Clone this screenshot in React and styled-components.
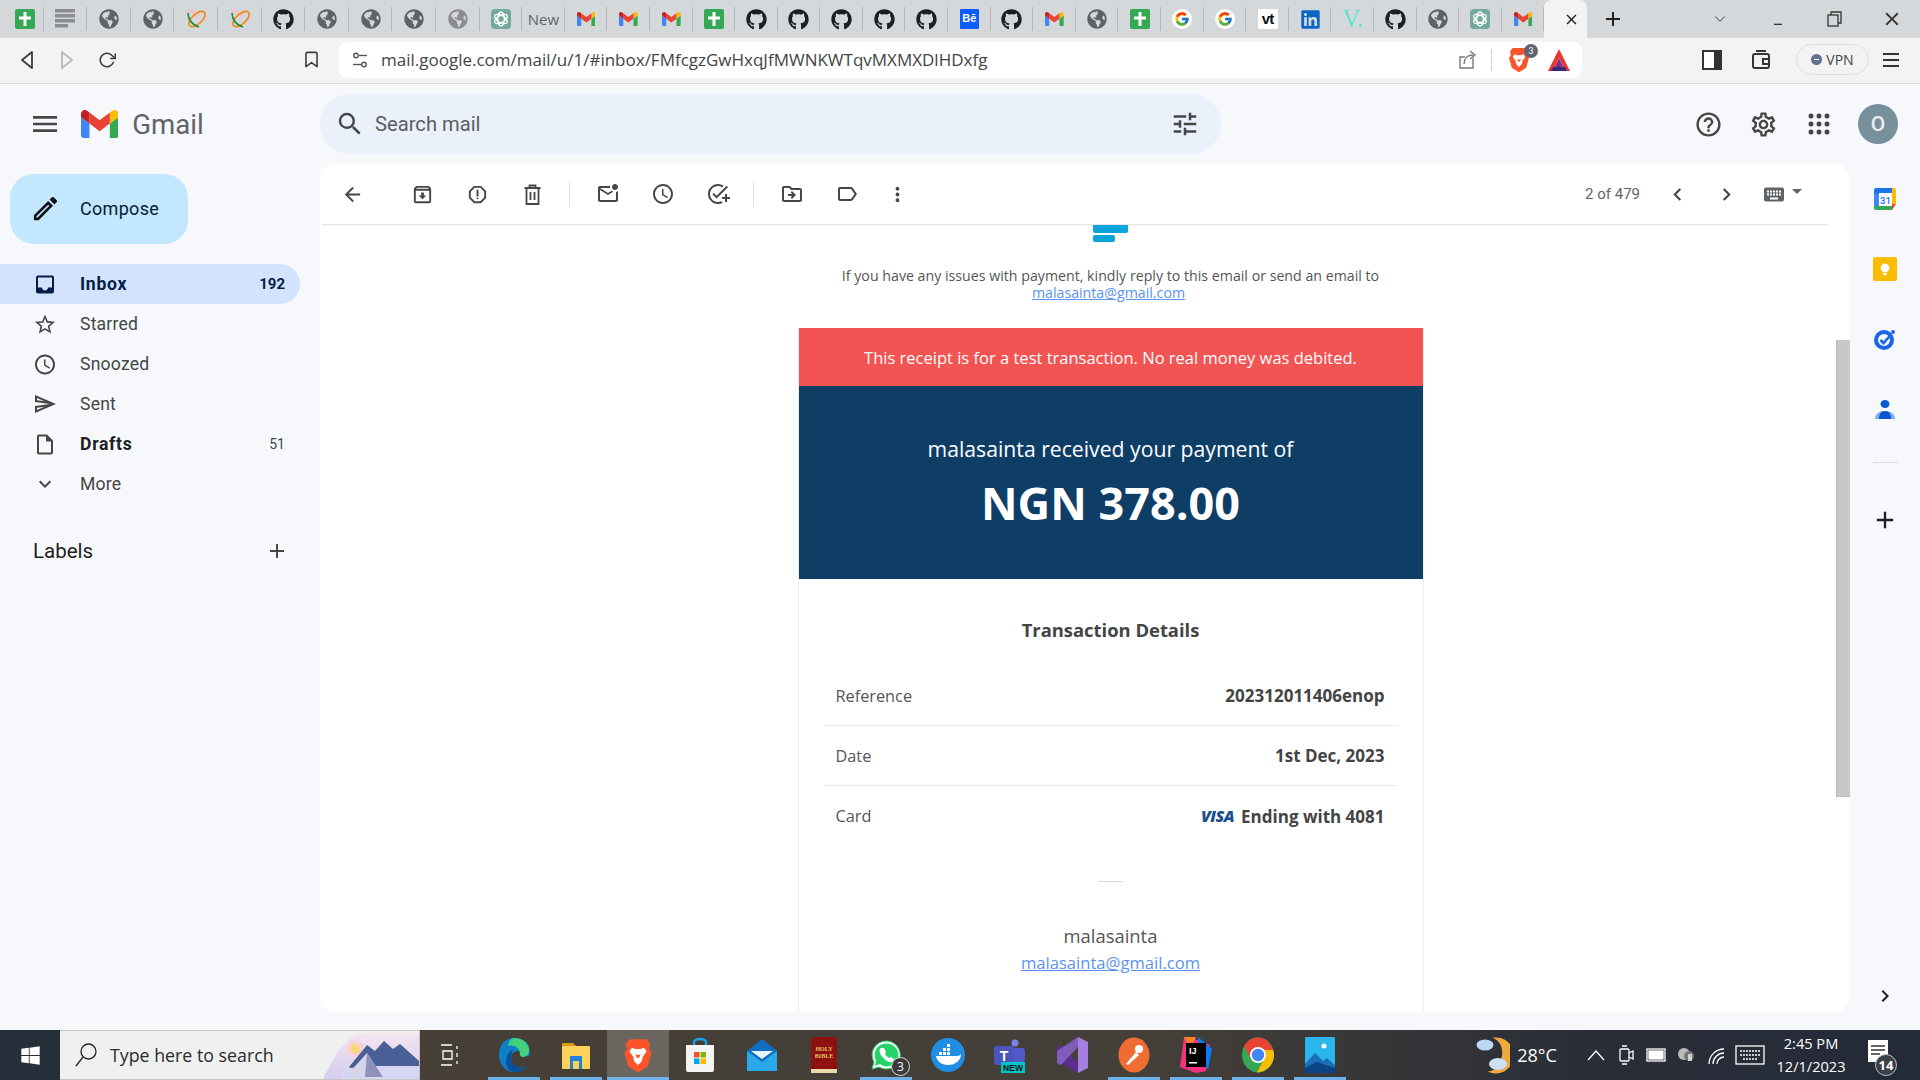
import React from "react"
import styled, { createGlobalStyle } from "styled-components"
import {
  MdArrowBack, MdOutlineArchive, MdOutlineReport, MdOutlineMarkEmailUnread,
  MdOutlineWatchLater, MdOutlineAddTask, MdOutlineDriveFileMove, MdOutlineLabel, MdMoreVert,
  MdChevronLeft, MdChevronRight, MdKeyboard, MdMenu, MdSearch, MdTune, MdOutlineHelpOutline,
  MdOutlineSettings, MdOutlineEdit, MdInbox, MdStarBorder, MdOutlineSend,
  MdOutlineInsertDriveFile, MdExpandMore, MdAdd, MdClose, MdOutlineMinimize,
} from "react-icons/md"
import { FaGithub, FaGlobeAmericas, FaLinkedin, FaWindows } from "react-icons/fa"
import { FcGoogle } from "react-icons/fc"
import { FiChevronDown, FiBookmark, FiRotateCw } from "react-icons/fi"

const GlobalStyle = createGlobalStyle`
  html, body { margin: 0; padding: 0; background: #f6f8fc; overflow: hidden; }
  * { box-sizing: border-box; }
  body { font-family: Roboto, "Liberation Sans", sans-serif; }
`

const Page = styled.div`
  width: 1920px;
  height: 1080px;
  display: flex;
  flex-direction: column;
  overflow: hidden;
  background: #f6f8fc;
`

/* browser chrome */
const TabStrip = styled.div`
  height: 38px;
  flex: none;
  display: flex;
  background: #d5d8db;
`
const Tab = styled.div`
  width: ${p => p.$w}px;
  flex: none;
  padding-left: ${p => p.$first ? 6 : 0}px;
  display: flex;
  align-items: center;
  justify-content: center;
  position: relative;
  &::after {
    content: "";
    position: absolute;
    right: 0;
    top: 7px;
    bottom: 7px;
    width: 1px;
    background: #b4b7ba;
  }
`
const ActiveTab = styled.div`
  width: 43px;
  flex: none;
  background: #f3f3f3;
  border-radius: 8px 8px 0 0;
  display: flex;
  align-items: center;
  padding-left: 19px;
  color: #222;
`
const NewTabLabel = styled.span`
  font: 15px "Open Sans", sans-serif;
  color: #5f6368;
`
const PlusButton = styled.div`
  width: 52px;
  display: flex;
  align-items: center;
  justify-content: center;
  color: #222;
`
const StripSpacer = styled.div`
  flex: 1;
`
const WinButton = styled.div`
  width: ${p => p.$w || 57}px;
  display: flex;
  align-items: center;
  justify-content: center;
  color: #333;
`
const AddressRow = styled.div`
  height: 46px;
  flex: none;
  display: flex;
  align-items: center;
  padding: 0 0 2px 7px;
  background: #f3f3f3;
  border-bottom: 1px solid #d9dbe1;
`
const NavButton = styled.div`
  width: 40px;
  height: 36px;
  flex: none;
  display: flex;
  align-items: center;
  justify-content: center;
  color: ${p => p.$dim ? "#b9b9b9" : "#3c3c3c"};
  margin-left: ${p => p.$ml || 0}px;
`
const AddressPill = styled.div`
  width: 1243px;
  height: 36px;
  margin-left: 8px;
  flex: none;
  background: #fff;
  border-radius: 8px;
  display: flex;
  align-items: center;
  padding: 0 11px 0 12px;
  color: #555;
`
const UrlText = styled.span`
  font: 17px "Open Sans", sans-serif;
  color: #444;
  margin-left: 12px;
  flex: 1;
  white-space: nowrap;
`
const PillDivider = styled.div`
  width: 1px;
  height: 22px;
  background: #d5d5d5;
  margin: 0 16px 0 13px;
`
const BraveWrap = styled.div`
  width: 22px;
  height: 26px;
  position: relative;
  margin-right: 17px;
`
const ShieldCount = styled.span`
  position: absolute;
  top: -3px;
  right: -8px;
  width: 14px;
  height: 14px;
  border-radius: 50%;
  background: #5e6470;
  color: #fff;
  font: 9px Roboto, sans-serif;
  text-align: center;
  line-height: 14px;
`
const VpnPill = styled.div`
  width: 73px;
  height: 31px;
  margin-left: 15px;
  border: 1px solid #dfdfdf;
  border-radius: 16px;
  display: flex;
  align-items: center;
  justify-content: center;
  gap: 4px;
  font: 14px "Open Sans", sans-serif;
  color: #444;
`
const VpnDot = styled.span`
  width: 11px;
  height: 11px;
  border-radius: 50%;
  background: #656f8e;
  display: flex;
  align-items: center;
  justify-content: center;
  &::after { content: ""; width: 5px; height: 1px; background: #fff; }
`

/* gmail header */
const GmailHeader = styled.div`
  height: 80px;
  flex: none;
  display: flex;
  align-items: flex-start;
  padding-top: 10px;
  padding-right: 22px;
`
const Brand = styled.div`
  width: 320px;
  height: 60px;
  flex: none;
  display: flex;
  align-items: center;
  padding-left: 29px;
  color: #444746;
`
const BrandName = styled.span`
  font: 400 27.6px Roboto, sans-serif;
  color: #5f6368;
  margin: 0 0 0 14px;
`
const LogoSlot = styled.div`
  margin-left: 20px;
  display: flex;
`
const SearchBar = styled.div`
  width: 901px;
  height: 60px;
  flex: none;
  background: #eaf1fb;
  border-radius: 30px;
  display: flex;
  align-items: center;
  padding: 0 21px 0 15px;
  color: #444746;
`
const SearchText = styled.span`
  flex: 1;
  margin-left: 10px;
  font-size: 20.2px;
  color: #5a5e60;
`
const HeaderTools = styled.div`
  margin-left: auto;
  height: 60px;
  display: flex;
  align-items: center;
  color: #444746;
`
const HeaderTool = styled.div`
  width: 55px;
  display: flex;
  justify-content: center;
`
const Avatar = styled.div`
  width: 40px;
  height: 40px;
  margin-left: 12px;
  border-radius: 50%;
  background: #78909c;
  color: #e8edf0;
  font: 500 21px Roboto, sans-serif;
  display: flex;
  align-items: center;
  justify-content: center;
`

/* body */
const Body = styled.div`
  flex: 1;
  min-height: 0;
  display: flex;
`
const Sidebar = styled.div`
  width: 320px;
  flex: none;
  padding-top: 10px;
`
const Compose = styled.div`
  width: 178px;
  height: 70px;
  margin-left: 10px;
  background: #c2e7ff;
  border-radius: 24px;
  display: flex;
  align-items: center;
  padding: 0 0 1px 20px;
  gap: 19px;
  color: #001d35;
  font-size: 18px;
  font-weight: 400;
  letter-spacing: 0.3px;
`
const NavList = styled.div`
  margin-top: 20px;
  width: 300px;
`
const NavRow = styled.div`
  height: 40px;
  display: flex;
  align-items: center;
  padding: 0 15px 0 33px;
  gap: 23px;
  border-radius: 0 20px 20px 0;
  background: ${p => p.$active ? "#d3e3fd" : "transparent"};
  color: ${p => p.$active ? "#041e49" : "#444746"};
  font-size: 17.6px;
  font-weight: ${p => p.$bold ? 700 : 400};
`
const NavIcon = styled.span`
  width: 24px;
  display: flex;
  justify-content: center;
  color: ${p => p.$active ? "#041e49" : "#444746"};
`
const NavLabel = styled.span`
  flex: 1;
  letter-spacing: ${p => p.$bold ? 0.7 : 0.2}px;
  color: ${p => p.$active ? "#041e49" : p.$bold ? "#202124" : "#444746"};
`
const NavCount = styled.span`
  font-size: ${p => p.$bold ? 15 : 14}px;
  font-weight: ${p => p.$bold ? 700 : 400};
`
const LabelsRow = styled.div`
  width: 300px;
  height: 40px;
  margin-top: 27px;
  padding: 0 11px 0 33px;
  display: flex;
  align-items: center;
  justify-content: space-between;
  font-size: 20.5px;
  color: #1f1f1f;
`

const MainCard = styled.div`
  width: 1530px;
  height: 848px;
  flex: none;
  background: #fff;
  border-radius: 16px;
  overflow: hidden;
  display: flex;
`
const MainColumn = styled.div`
  flex: 1;
  min-width: 0;
  display: flex;
  flex-direction: column;
`
const ScrollTrack = styled.div`
  width: 14px;
  flex: none;
  padding-top: 176px;
`
const ScrollThumb = styled.div`
  height: 457px;
  background: #c8c8c8;
  border-left: 1px solid #b5b5b5;
  border-bottom: 1px solid #bdbdbd;
`
const Toolbar = styled.div`
  height: 61px;
  flex: none;
  margin: 0 8px 0 2px;
  padding: 0 22px 0 8px;
  border-bottom: 1px solid #e6e6e6;
  box-shadow: 0 1px 1px rgba(0, 0, 0, 0.03);
  display: flex;
  align-items: center;
  color: #444746;
`
const ToolButton = styled.div`
  width: ${p => p.$w || 55}px;
  margin-left: ${p => p.$ml || 0}px;
  flex: none;
  display: flex;
  justify-content: center;
`
const ToolDivider = styled.div`
  width: 1px;
  height: 25px;
  margin: 0 10px 0 ${p => p.$ml}px;
  background: #e3e3e3;
`
const PagerText = styled.span`
  margin-left: auto;
  margin-right: 13px;
  font-size: 15px;
  color: #5f6368;
`
const Caret = styled.div`
  width: 18px;
  margin-left: 2.5px;
  display: flex;
  justify-content: center;
  margin-bottom: 6px;
  &::after {
    content: "";
    border-left: 5px solid transparent;
    border-right: 5px solid transparent;
    border-top: 5px solid #5f6368;
  }
`

/* message */
const MessageArea = styled.div`
  flex: 1;
  min-height: 0;
  overflow: hidden;
  padding-left: 65px;
  display: flex;
  flex-direction: column;
  align-items: center;
  font-family: "Open Sans", "Noto Sans", sans-serif;
`
const MailLogo = styled.div`
  width: 36px;
  flex: none;
  display: flex;
  flex-direction: column;
  gap: 2px;
`
const LogoBar = styled.div`
  height: ${p => p.$h}px;
  width: ${p => p.$w}px;
  background: #0ba4db;
  border-radius: ${p => p.$r};
`
const HelpText = styled.p`
  margin: 25px 0 0;
  text-align: center;
  font-size: 14.2px;
  line-height: 17px;
  color: #555;
`
const MailLink = styled.a`
  color: #5b93ee;
  text-decoration: underline;
  margin-right: ${p => p.$nudge || 0}px;
`
const Receipt = styled.div`
  width: 626px;
  flex: none;
  margin-top: 27px;
  padding-bottom: 60px;
  border-left: 1px solid #eee;
  border-right: 1px solid #eee;
`
const TestBanner = styled.div`
  height: 58px;
  background: #f25353;
  color: #fff;
  font-size: 16.5px;
  display: flex;
  align-items: center;
  justify-content: center;
`
const AmountPanel = styled.div`
  height: 193px;
  background: #0e3d65;
  color: #fff;
  display: flex;
  flex-direction: column;
  align-items: center;
  padding-top: 46px;
`
const AmountLead = styled.div`
  font-size: 21.2px;
  line-height: 34px;
`
const AmountValue = styled.div`
  font-size: 45px;
  font-weight: 700;
  line-height: 60px;
  margin-top: 7px;
`
const DetailsTitle = styled.div`
  margin-top: 40px;
  text-align: center;
  font-size: 18.4px;
  line-height: 22px;
  font-weight: 700;
  color: #444;
`
const DetailsList = styled.div`
  margin: 25px 25px 0;
`
const DetailRow = styled.div`
  height: 60px;
  display: flex;
  align-items: center;
  justify-content: space-between;
  padding: 0 13px 0 12px;
  font-size: 16.3px;
  color: #555;
  &:not(:last-child) { border-bottom: 1px solid #ececec; }
`
const DetailValue = styled.span`
  display: flex;
  align-items: center;
  gap: 7px;
  font-size: 17px;
  font-weight: 700;
  color: #444;
`
const VisaMark = styled.span`
  font: italic 800 16px "Open Sans", sans-serif;
  color: #1a4f8f;
  letter-spacing: -0.5px;
`
const ShortRule = styled.div`
  width: 25px;
  height: 1px;
  margin: 35px auto 0;
  background: #d9d9d9;
`
const Merchant = styled.div`
  margin-top: 42px;
  text-align: center;
  font-size: 18.4px;
  line-height: 24px;
  color: #555;
`
const MerchantLink = styled.div`
  margin-top: 3px;
  text-align: center;
  font-size: 16.6px;
  line-height: 24px;
`

/* right rail */
const Rail = styled.div`
  width: 70px;
  flex: none;
  display: flex;
  flex-direction: column;
  align-items: center;
  padding-bottom: 14px;
`
const RailSlot = styled.div`
  height: ${p => p.$h || 70}px;
  flex: none;
  display: flex;
  align-items: center;
  justify-content: center;
  color: #1f1f1f;
`
const RailRule = styled.div`
  width: 25px;
  height: 1px;
  flex: none;
  margin: 18px 0 37px;
  background: #dadce0;
`
const RailBottom = styled(RailSlot)`
  margin-top: auto;
`

/* windows taskbar */
const Taskbar = styled.div`
  height: 50px;
  flex: none;
  display: flex;
  background: linear-gradient(90deg, #453f37 0%, #443f38 60%, #2a2e38 82%, #232a38 100%);
`
const StartButton = styled.div`
  width: 60px;
  flex: none;
  background: #252f3a;
  color: #fff;
  display: flex;
  align-items: center;
  justify-content: center;
`
const TaskSearch = styled.div`
  width: 360px;
  flex: none;
  background: #f0f0f0;
  border: 1px solid #c6c6c6;
  border-left: 0;
  display: flex;
  align-items: center;
  padding-left: 14px;
  gap: 12px;
  color: #222;
  overflow: hidden;
`
const TaskSearchText = styled.span`
  flex: 1;
  font: 17.8px "Open Sans", sans-serif;
  color: #2b2b2b;
  white-space: nowrap;
`
const TaskViewSlot = styled.div`
  width: 63px;
  flex: none;
  padding-right: 4px;
  color: #fff;
  display: flex;
  align-items: center;
  justify-content: center;
`
const TaskApp = styled.div`
  width: 62px;
  flex: none;
  position: relative;
  display: flex;
  align-items: center;
  justify-content: center;
  background: ${p => p.$focus ? "#6a665f" : "transparent"};
  &::after {
    content: "";
    display: ${p => p.$open ? "block" : "none"};
    position: absolute;
    left: ${p => p.$focus ? 0 : 5}px;
    right: ${p => p.$focus ? 0 : 5}px;
    bottom: 0;
    height: 3px;
    background: #6cb2e8;
  }
`
const AppBadge = styled.span`
  position: absolute;
  right: 7px;
  bottom: 4px;
  width: 19px;
  height: 19px;
  border-radius: 50%;
  background: #3a3a38;
  border: 1px solid #ddd;
  color: #fff;
  font: 12px "Open Sans", sans-serif;
  text-align: center;
  line-height: 17px;
`
const Tray = styled.div`
  margin-left: auto;
  width: 444px;
  flex: none;
  display: flex;
  align-items: center;
  color: #fff;
`
const TraySlot = styled.div`
  width: ${p => p.$w}px;
  margin-left: ${p => p.$ml || 0}px;
  flex: none;
  display: flex;
  align-items: center;
  justify-content: center;
  position: relative;
`
const TrayTemp = styled.span`
  font: 18px "Open Sans", sans-serif;
`
const Clock = styled.div`
  width: 86px;
  flex: none;
  text-align: center;
  font: 14.6px/23px "Open Sans", sans-serif;
`
const NoteBadge = styled.span`
  position: absolute;
  right: 5px;
  bottom: -6px;
  width: 22px;
  height: 22px;
  border-radius: 50%;
  background: #3a3f48;
  border: 1px solid #bbb;
  font: 700 13px/20px "Open Sans", sans-serif;
  text-align: center;
`

const GmailM = ({ h = 28 }) => (
  <svg viewBox="52 42 88 66" height={h} width={h * 88 / 66}>
    <path fill="#4285f4" d="M58 108h14V74L52 59v43c0 3.32 2.69 6 6 6" />
    <path fill="#34a853" d="M120 108h14c3.32 0 6-2.69 6-6V59l-20 15" />
    <path fill="#fbbc04" d="M120 48v26l20-15v-8c0-7.42-8.47-11.65-14.4-7.2" />
    <path fill="#ea4335" d="M72 74V48l24 18 24-18v26L96 92" />
    <path fill="#c5221f" d="M52 51v8l20 15V48l-5.6-4.2c-5.94-4.45-14.4-.22-14.4 7.2" />
  </svg>
)
const SheetsTab = () => (
  <svg width="20" height="20" viewBox="0 0 20 20">
    <rect width="20" height="20" rx="2" fill="#34a853" />
    <path d="M10 3v14M4 9h12" stroke="#fff" strokeWidth="3" />
  </svg>
)
const DocTab = () => (
  <svg width="20" height="20" viewBox="0 0 20 20" fill="#8b8d90">
    <rect y="0" width="20" height="3.5" /><rect y="5" width="20" height="3.5" />
    <rect y="10" width="20" height="3.5" /><rect y="15" width="13" height="3.5" />
  </svg>
)
const OrbitTab = () => (
  <svg width="22" height="20" viewBox="0 0 22 20" fill="none">
    <path d="M3 3c3-3 7 0 8 4 1-2 2-2 3-1" stroke="#f8bcc8" strokeWidth="2.4" />
    <ellipse cx="12" cy="10" rx="5" ry="10" transform="rotate(48 12 10)" stroke="#ef8a17" strokeWidth="1.6" />
    <path d="M3 4c0 6 4 12 11 14" stroke="#168a3a" strokeWidth="1.6" />
  </svg>
)
const OpenAiTab = () => (
  <svg width="20" height="20" viewBox="0 0 20 20" fill="none">
    <rect width="20" height="20" rx="4" fill="#74aa9c" />
    <g stroke="#fff" strokeWidth="1.3">
      <ellipse cx="10" cy="10" rx="3.4" ry="7" />
      <ellipse cx="10" cy="10" rx="3.4" ry="7" transform="rotate(60 10 10)" />
      <ellipse cx="10" cy="10" rx="3.4" ry="7" transform="rotate(120 10 10)" />
    </g>
  </svg>
)
const BehanceTab = styled.div`
  width: 19px;
  height: 20px;
  background: #0b5cff;
  color: #fff;
  border-radius: 1px;
  font: 700 11px/19px "Liberation Sans", sans-serif;
  text-align: center;
`
const GoogleTab = styled.div`
  width: 20px;
  height: 20px;
  border-radius: 50%;
  background: #fff;
  display: flex;
  align-items: center;
  justify-content: center;
`
const VtTab = styled.div`
  width: 20px;
  height: 20px;
  background: #fff;
  color: #111;
  font: 700 15px/20px "Liberation Sans", sans-serif;
  letter-spacing: -1px;
  text-align: center;
`
const VeeTab = styled.div`
  color: #5fe3d0;
  font: 400 25px/26px "Liberation Serif", serif;
`

const tabIcon = kind => {
  switch (kind) {
    case "sheets": return <SheetsTab />
    case "doc": return <DocTab />
    case "globe": return <FaGlobeAmericas size={20} color="#5f6368" />
    case "globeFaded": return <FaGlobeAmericas size={20} color="#8a8c8f" />
    case "orbit": return <OrbitTab />
    case "github": return <FaGithub size={21} color="#1b1f23" />
    case "openai": return <OpenAiTab />
    case "new": return <NewTabLabel>New</NewTabLabel>
    case "gmail": return <GmailM h={14} />
    case "behance": return <BehanceTab>Bē</BehanceTab>
    case "google": return <GoogleTab><FcGoogle size={16} /></GoogleTab>
    case "vt": return <VtTab>vt</VtTab>
    case "linkedin": return <FaLinkedin size={21} color="#0a66c2" />
    case "vee": return <VeeTab>V.</VeeTab>
    default: return null
  }
}

const tabs = [
  "sheets", "doc", "globe", "globe", "orbit", "orbit", "github", "globe", "globe", "globe", "globeFaded",
  "openai", "new", "gmail", "gmail", "gmail", "sheets", "github", "github", "github", "github", "github",
  "behance", "github", "gmail", "globe", "sheets", "google", "google", "vt", "linkedin", "vee", "github",
  "globe", "openai", "gmail",
]

const BraveIcon = ({ size = 24 }) => (
  <svg width={size} height={size * 1.15} viewBox="0 0 24 28">
    <path fill="#fb542b" d="M5 1h14l3 4-1 4 2 3-3 11-8 5-8-5L1 12l2-3-1-4z" />
    <path fill="#fff" d="M7 8l3 1h4l3-1 2 3-3 4-1 4-3 3-3-3-1-4-3-4z" />
    <path fill="#fb542b" d="M10 13l2 1 2-1-1 3h-2z" />
  </svg>
)
const BatIcon = () => (
  <svg width="24" height="24" viewBox="0 0 24 24">
    <path fill="#e8362c" d="M12 1l11 22h-5L12 10 6 23H1z" />
    <path fill="#7b2d8e" d="M12 10l4 9H8z" />
    <path fill="#3a2a78" d="M6 19h12l2 4H4z" />
  </svg>
)
const WalletIcon = () => (
  <svg width="22" height="22" viewBox="0 0 22 22" fill="none" stroke="#333" strokeWidth="2">
    <rect x="3" y="5" width="16" height="14" rx="2" />
    <path d="M6 2h10M19 10h-6v5h6" />
  </svg>
)
const MenuLines = () => (
  <svg width="18" height="16" viewBox="0 0 18 16" stroke="#333" strokeWidth="2">
    <path d="M1 2h16M1 8h16M1 14h16" />
  </svg>
)
const SiteTune = () => (
  <svg width="18" height="18" viewBox="0 0 18 18" fill="none" stroke="#555" strokeWidth="1.4">
    <circle cx="5" cy="4.5" r="2.2" /><path d="M8 4.5h8" />
    <circle cx="13" cy="13.5" r="2.2" /><path d="M2 13.5h8" />
  </svg>
)
const ShareIcon = () => (
  <svg width="20" height="20" viewBox="0 0 20 20" fill="none" stroke="#777" strokeWidth="1.4">
    <path d="M15 8v10H2V7h5" />
    <path d="M6 14c0-5 3-9 9-9M12 1l5 4-5 4" />
  </svg>
)
const PanelIcon = () => (
  <svg width="20" height="22" viewBox="0 0 20 22">
    <rect x="1" y="2" width="18" height="18" fill="#fff" stroke="#333" strokeWidth="2" />
    <rect x="12" y="2" width="7" height="18" fill="#333" />
  </svg>
)
const AppsDots = () => (
  <svg width="22" height="22" viewBox="0 0 22 22" fill="#444746">
    {[3, 11, 19].flatMap(y => [3, 11, 19].map(x => <circle key={`${x}-${y}`} cx={x} cy={y} r="2.5" />))}
  </svg>
)
const TrashIcon = () => (
  <svg width="23" height="23" viewBox="0 0 23 23" fill="none" stroke="#444746" strokeWidth="1.8">
    <path d="M3.500 5h16M8.500 5V2.500h6V5M5.500 5v16h12V5M9.500 9v8M13.500 9v8" />
  </svg>
)
const BackTriangle = ({ flip, color }) => (
  <svg width="14" height="20" viewBox="0 0 14 20" fill="none" stroke={color} strokeWidth="1.8" strokeLinejoin="round"
    transform={flip ? "scale(-1 1)" : undefined}>
    <path d="M12 2v16L2 10z" />
  </svg>
)
const MaxIcon = () => (
  <svg width="15" height="16" viewBox="0 0 15 16" fill="none" stroke="#333" strokeWidth="1.3">
    <rect x="1" y="4" width="10" height="11" /><path d="M4 4V1h10v11h-3" />
  </svg>
)

const CalendarIcon = () => (
  <svg width="24" height="24" viewBox="0 0 24 24">
    <rect x="1" y="1" width="22" height="22" rx="2" fill="#fff" />
    <path d="M1 7V3a2 2 0 012-2h16v5H6v1z" fill="#1a73e8" />
    <path d="M19 1h2a2 2 0 012 2v14h-4z" fill="#fbbc04" />
    <path d="M1 7h5v12H1z" fill="#4285f4" />
    <path d="M1 19h18v4H3a2 2 0 01-2-2z" fill="#34a853" />
    <path d="M19 23v-6h4z" fill="#ea4335" />
    <text x="12.5" y="16.5" fontSize="9.5" fontFamily="Roboto" fontWeight="500" textAnchor="middle" fill="#1a73e8">31</text>
  </svg>
)
const KeepIcon = () => (
  <svg width="24" height="24" viewBox="0 0 24 24">
    <rect y="0" width="24" height="24" rx="2" fill="#fbbc04" />
    <circle cx="12" cy="11" r="4.4" fill="#fff" />
    <rect x="10" y="16" width="4" height="2" fill="#fff" />
  </svg>
)
const TasksIcon = () => (
  <svg width="24" height="24" viewBox="0 0 24 24" fill="none">
    <circle cx="11" cy="13" r="8" stroke="#1a66e8" strokeWidth="4" />
    <path d="M7.5 13l3 3 8-9" stroke="#1a66e8" strokeWidth="2.6" />
    <circle cx="20" cy="5" r="2" fill="#1a66e8" />
  </svg>
)
const ContactsIcon = () => (
  <svg width="24" height="24" viewBox="0 0 24 24">
    <ellipse cx="12" cy="7" rx="4.5" ry="4" fill="#0b57d0" />
    <path d="M2 22c0-5 4-8 10-8s10 3 10 8z" fill="#7baaf7" />
    <path d="M6 22c0-5 2-8 6-8s6 3 6 8z" fill="#0b57d0" />
  </svg>
)

const SearchArt = () => (
  <svg width="96" height="48" viewBox="0 0 96 48">
    <defs>
      <linearGradient id="sky" x1="0" x2="0" y1="0" y2="1">
        <stop offset="0" stopColor="#f3e4ef" /><stop offset="1" stopColor="#d6cdf0" />
      </linearGradient>
    </defs>
    <path d="M0 48C10 28 20 6 40 2h56v46z" fill="url(#sky)" />
    <circle cx="32" cy="18" r="9" fill="#f7d2dc" /><circle cx="32" cy="18" r="5" fill="#f5d77c" />
    <path d="M26 36l18-22 8 6 9-10 9 8 7-5 19 17v8H30z" fill="#4a5f95" />
    <path d="M20 40l15-5h61v13H18z" fill="#d4d6f3" />
    <path d="M24 44l20-22 16 24z" fill="#d8d4ea" />
    <path d="M44 22l16 24H42z" fill="#8f90bb" />
  </svg>
)
const EdgeIcon = () => (
  <svg width="32" height="36" viewBox="0 0 32 36">
    <path d="M16 1C7 1 1 8 1 18c0 9 6 17 15 17 5 0 9-2 12-5-6 2-15 0-15-9 0-4 3-7 7-7s6 2 6 5h5c2-5 1-18-15-18z" fill="#0f7fc7" />
    <path d="M16 1c10 0 16 7 15 14-1 4-4 5-6 5-2 0-3-1-3-3 0-7-7-10-12-8 1-5 3-8 6-8z" fill="#43d17e" />
    <path d="M13 21c0 9 9 11 15 9-2 3-6 5-11 5-5 0-9-4-9-10s3-11 7-13c-1 3-2 6-2 9z" fill="#0a4f9c" />
  </svg>
)
const ExplorerIcon = () => (
  <svg width="30" height="30" viewBox="0 0 30 30">
    <path d="M1 3h11l3 3H1z" fill="#d89c12" />
    <rect x="1" y="6" width="28" height="23" rx="1" fill="#fbd35a" />
    <rect x="9" y="16" width="12" height="13" fill="#1f82d4" />
    <rect x="12" y="21" width="6" height="8" fill="#fbd35a" />
  </svg>
)
const StoreIcon = () => (
  <svg width="30" height="36" viewBox="0 0 30 36">
    <path d="M9 9V5a6 3 0 0112 0v4" fill="none" stroke="#1aa0e0" strokeWidth="2.4" />
    <path d="M1 8h28v25a2 2 0 01-2 2H3a2 2 0 01-2-2z" fill="#f4f4f4" />
    <rect x="9" y="15" width="5.5" height="5.5" fill="#f25022" />
    <rect x="15.5" y="15" width="5.5" height="5.5" fill="#7fba00" />
    <rect x="9" y="21.5" width="5.5" height="5.5" fill="#00a4ef" />
    <rect x="15.5" y="21.5" width="5.5" height="5.5" fill="#ffb900" />
  </svg>
)
const MailIcon = () => (
  <svg width="30" height="32" viewBox="0 0 30 32">
    <path d="M15 0l15 12v20H0V12z" fill="#0f6ec0" />
    <path d="M0 12l15 11 15-11v20H0z" fill="#2aa8ea" />
    <path d="M4 12h22l-11 8z" fill="#e8f4fb" />
  </svg>
)
const BibleIcon = () => (
  <svg width="28" height="36" viewBox="0 0 28 36">
    <rect x="1" y="0" width="26" height="36" rx="3" fill="#8e1010" />
    <rect x="1" y="32" width="26" height="4" fill="#e9d9a8" />
    <text x="14" y="14" fontSize="6" fontFamily="Liberation Serif" fontWeight="700" textAnchor="middle" fill="#e8c55a">HOLY</text>
    <text x="14" y="21" fontSize="6" fontFamily="Liberation Serif" fontWeight="700" textAnchor="middle" fill="#e8c55a">BIBLE</text>
  </svg>
)
const WhatsAppIcon = () => (
  <svg width="32" height="32" viewBox="0 0 32 32">
    <path d="M16 2a14 14 0 00-12 21L2 30l7-2A14 14 0 1016 2z" fill="#fff" stroke="#25d366" strokeWidth="1" />
    <path d="M16 4.500a11.500 11.500 0 00-10 17l-1 5 5-1.300A11.500 11.500 0 1016 4.500z" fill="#25d366" />
    <path d="M11 9c-2 1-2 4 0 7s6 7 9 7 4-2 4-3l-3-2-2 1c-2-1-3-3-4-4l1-2-2-4z" fill="#fff" />
  </svg>
)
const DockerIcon = () => (
  <svg width="34" height="34" viewBox="0 0 34 34">
    <circle cx="17" cy="17" r="17" fill="#1f8fe5" />
    <path d="M5 18h21c2 0 3-1 4-2 0 6-5 11-13 11-7 0-11-4-12-9z" fill="#fff" />
    <path d="M8 14h3v3H8zM12 14h3v3h-3zM16 14h3v3h-3zM12 10h3v3h-3zM16 10h3v3h-3zM16 6h3v3h-3z" fill="#fff" />
  </svg>
)
const TeamsIcon = () => (
  <svg width="34" height="36" viewBox="0 0 34 36">
    <circle cx="22" cy="6" r="3.500" fill="#7b83eb" />
    <rect x="17" y="11" width="15" height="14" rx="3" fill="#5059c9" />
    <rect x="1" y="9" width="20" height="19" rx="2" fill="#4b53bc" />
    <text x="11" y="24" fontSize="14" fontFamily="Liberation Sans" fontWeight="700" textAnchor="middle" fill="#fff">T</text>
    <rect x="8" y="25" width="24" height="11" fill="#00c4c8" />
    <text x="20" y="34" fontSize="8.500" fontFamily="Liberation Sans" fontWeight="700" textAnchor="middle" fill="#111">NEW</text>
  </svg>
)
const VsIcon = () => (
  <svg width="32" height="36" viewBox="0 0 32 36">
    <path d="M22 0l10 5v26l-10 5z" fill="#a77fe0" />
    <path d="M1 10l4-2 17 18v10L1 24z" fill="#5c2d91" />
    <path d="M1 26l4 2 17-18V0L1 14z" fill="#8661c5" opacity=".9" />
  </svg>
)
const PostmanIcon = () => (
  <svg width="32" height="36" viewBox="0 0 32 36">
    <ellipse cx="16" cy="18" rx="15.500" ry="17.500" fill="#ef6c33" />
    <path d="M8 27l10-12 3 3-11 10z" fill="#fff" />
    <circle cx="21" cy="12" r="4" fill="#fff" />
  </svg>
)
const IdeaIcon = () => (
  <svg width="32" height="36" viewBox="0 0 32 36">
    <path d="M4 0l14 3 12 5-4 26-10 2L0 30z" fill="#f5317f" />
    <path d="M18 0l14 12-4 20-10-8z" fill="#087cfa" />
    <path d="M4 0h12l-6 14z" fill="#fe7f2d" />
    <rect x="6" y="6" width="20" height="24" fill="#000" />
    <text x="9" y="17" fontSize="9" fontFamily="Liberation Sans" fontWeight="700" fill="#fff">IJ</text>
    <rect x="9" y="25" width="8" height="1.500" fill="#fff" />
  </svg>
)
const ChromeIcon = () => (
  <svg width="34" height="36" viewBox="0 0 34 36">
    <ellipse cx="17" cy="18" rx="16" ry="17.500" fill="#34a853" />
    <path d="M17 .5C11 .5 6 4 3 9l7 13 7-9h15C29 5 24 .5 17 .5z" fill="#ea4335" />
    <path d="M32 13H17l6 9-7 13.500C26 35 33 27 33 18c0-2-.3-3.500-1-5z" fill="#fbbc04" />
    <circle cx="17" cy="18" r="8" fill="#fff" />
    <circle cx="17" cy="18" r="6.200" fill="#4285f4" />
  </svg>
)
const PhotosIcon = () => (
  <svg width="30" height="36" viewBox="0 0 30 36">
    <rect width="30" height="36" rx="1" fill="#29b6ea" />
    <circle cx="19" cy="9" r="2.500" fill="#fff" />
    <path d="M0 27l10-11 8 8 4-3 8 7v8H0z" fill="#1b6fb5" />
    <path d="M0 31l12-6 18 6v5H0z" fill="#0d4488" />
  </svg>
)
const WeatherIcon = () => (
  <svg width="34" height="40" viewBox="0 0 34 40">
    <path d="M14 3a18 18 0 110 34c9-2 12-9 12-17S23 5 14 3z" fill="#f2a93b" transform="rotate(8 17 20)" />
    <ellipse cx="9" cy="10" rx="8.500" ry="5.500" fill="#bcd6f4" />
    <ellipse cx="22" cy="29" rx="9" ry="6" fill="#cde0f6" />
  </svg>
)
const TaskSearchGlass = () => (
  <svg width="24" height="26" viewBox="0 0 24 26" fill="none" stroke="#222" strokeWidth="1.300">
    <circle cx="14.500" cy="9.500" r="7.500" /><path d="M9 15L2 24" />
  </svg>
)
const TrayStroke = ({ children, w = 20, h = 20 }) => (
  <svg width={w} height={h} viewBox={`0 0 ${w} ${h}`} fill="none" stroke="#fff" strokeWidth="1.300">{children}</svg>
)

const apps = [
  { icon: <EdgeIcon />, open: true }, { icon: <ExplorerIcon />, open: true }, { icon: <BraveIcon size={30} />, open: true, focus: true },
  { icon: <StoreIcon /> }, { icon: <MailIcon /> }, { icon: <BibleIcon /> },
  { icon: <WhatsAppIcon />, open: true, badge: "3" }, { icon: <DockerIcon /> }, { icon: <TeamsIcon /> }, { icon: <VsIcon /> },
  { icon: <PostmanIcon />, open: true }, { icon: <IdeaIcon />, open: true }, { icon: <ChromeIcon />, open: true }, { icon: <PhotosIcon />, open: true },
]

const navItems = [
  { label: "Inbox", icon: <MdInbox size={25} />, count: "192", active: true, bold: true },
  { label: "Starred", icon: <MdStarBorder size={25} /> },
  { label: "Snoozed", icon: <MdOutlineWatchLater size={25} /> },
  { label: "Sent", icon: <MdOutlineSend size={24} /> },
  { label: "Drafts", icon: <MdOutlineInsertDriveFile size={25} />, count: "51", bold: true },
  { label: "More", icon: <MdExpandMore size={24} /> },
]

export default function App() {
  return (
    <Page>
      <GlobalStyle />
      <TabStrip>
        {tabs.map((kind, i) => (
          <Tab key={i} $first={i === 0} $w={i < 11 ? 43.6 : 42.6}>{tabIcon(kind)}</Tab>
        ))}
        <ActiveTab><MdClose size={17} /></ActiveTab>
        <PlusButton><MdAdd size={24} /></PlusButton>
        <StripSpacer />
        <WinButton $w={40}><FiChevronDown size={18} strokeWidth={1.2} /></WinButton>
        <WinButton $w={9} />
        <WinButton><MdOutlineMinimize size={16} /></WinButton>
        <WinButton><MaxIcon /></WinButton>
        <WinButton><MdClose size={22} /></WinButton>
      </TabStrip>

      <AddressRow>
        <NavButton><BackTriangle color="#3c3c3c" /></NavButton>
        <NavButton $dim><BackTriangle flip color="#b9b9b9" /></NavButton>
        <NavButton><FiRotateCw size={18} /></NavButton>
        <NavButton $ml={164}><FiBookmark size={19} /></NavButton>
        <AddressPill>
          <SiteTune />
          <UrlText>mail.google.com/mail/u/1/#inbox/FMfcgzGwHxqJfMWNKWTqvMXMXDlHDxfg</UrlText>
          <ShareIcon />
          <PillDivider />
          <BraveWrap><BraveIcon size={22} /><ShieldCount>3</ShieldCount></BraveWrap>
          <BatIcon />
        </AddressPill>
        <NavButton $ml={110}><PanelIcon /></NavButton>
        <NavButton $ml={9}><WalletIcon /></NavButton>
        <VpnPill><VpnDot />VPN</VpnPill>
        <NavButton $ml={2}><MenuLines /></NavButton>
      </AddressRow>

      <GmailHeader>
        <Brand>
          <MdMenu size={32} />
          <LogoSlot><GmailM h={28} /></LogoSlot>
          <BrandName>Gmail</BrandName>
        </Brand>
        <SearchBar>
          <MdSearch size={30} />
          <SearchText>Search mail</SearchText>
          <MdTune size={30} />
        </SearchBar>
        <HeaderTools>
          <HeaderTool><MdOutlineHelpOutline size={29} /></HeaderTool>
          <HeaderTool><MdOutlineSettings size={29} /></HeaderTool>
          <HeaderTool><AppsDots /></HeaderTool>
          <Avatar>O</Avatar>
        </HeaderTools>
      </GmailHeader>

      <Body>
        <Sidebar>
          <Compose><MdOutlineEdit size={31} color="#111" />Compose</Compose>
          <NavList>
            {navItems.map(item => (
              <NavRow key={item.label} $active={item.active} $bold={item.bold}>
                <NavIcon $active={item.active}>{item.icon}</NavIcon>
                <NavLabel $active={item.active} $bold={item.bold}>{item.label}</NavLabel>
                {item.count && <NavCount $bold={item.active}>{item.count}</NavCount>}
              </NavRow>
            ))}
          </NavList>
          <LabelsRow>Labels<MdAdd size={24} color="#444746" /></LabelsRow>
        </Sidebar>

        <MainCard>
          <MainColumn>
            <Toolbar>
              <ToolButton $w={44}><MdArrowBack size={23} /></ToolButton>
              <ToolButton $ml={21}><MdOutlineArchive size={23} /></ToolButton>
              <ToolButton><MdOutlineReport size={23} /></ToolButton>
              <ToolButton><TrashIcon /></ToolButton>
              <ToolDivider $ml={9} />
              <ToolButton><MdOutlineMarkEmailUnread size={24} /></ToolButton>
              <ToolButton><MdOutlineWatchLater size={24} /></ToolButton>
              <ToolButton><MdOutlineAddTask size={24} /></ToolButton>
              <ToolDivider $ml={8} />
              <ToolButton><MdOutlineDriveFileMove size={24} /></ToolButton>
              <ToolButton><MdOutlineLabel size={24} /></ToolButton>
              <ToolButton $w={46}><MdMoreVert size={23} /></ToolButton>
              <PagerText>2 of 479</PagerText>
              <ToolButton $w={49}><MdChevronLeft size={25} /></ToolButton>
              <ToolButton $w={49}><MdChevronRight size={25} /></ToolButton>
              <ToolButton $w={24} $ml={10.5}><MdKeyboard size={25} color="#5f6368" /></ToolButton>
              <Caret />
            </Toolbar>
            <MessageArea>
              <MailLogo>
                <LogoBar $w={35} $h={8} $r="0 0 2px 2px" />
                <LogoBar $w={22} $h={7} $r="2px" />
              </MailLogo>
              <HelpText>
                If you have any issues with payment, kindly reply to this email or send an email to<br />
                <MailLink $nudge={4}>malasainta@gmail.com</MailLink>
              </HelpText>
              <Receipt>
                <TestBanner>This receipt is for a test transaction. No real money was debited.</TestBanner>
                <AmountPanel>
                  <AmountLead>malasainta received your payment of</AmountLead>
                  <AmountValue>NGN 378.00</AmountValue>
                </AmountPanel>
                <DetailsTitle>Transaction Details</DetailsTitle>
                <DetailsList>
                  <DetailRow>Reference<DetailValue>202312011406enop</DetailValue></DetailRow>
                  <DetailRow>Date<DetailValue>1st Dec, 2023</DetailValue></DetailRow>
                  <DetailRow>Card<DetailValue><VisaMark>VISA</VisaMark>Ending with 4081</DetailValue></DetailRow>
                </DetailsList>
                <ShortRule />
                <Merchant>malasainta</Merchant>
                <MerchantLink><MailLink>malasainta@gmail.com</MailLink></MerchantLink>
              </Receipt>
            </MessageArea>
          </MainColumn>
          <ScrollTrack><ScrollThumb /></ScrollTrack>
        </MainCard>

        <Rail>
          <RailSlot><CalendarIcon /></RailSlot>
          <RailSlot><KeepIcon /></RailSlot>
          <RailSlot><TasksIcon /></RailSlot>
          <RailSlot><ContactsIcon /></RailSlot>
          <RailRule />
          <RailSlot $h={40}><MdAdd size={28} /></RailSlot>
          <RailBottom $h={40}><MdChevronRight size={24} /></RailBottom>
        </Rail>
      </Body>

      <Taskbar>
        <StartButton><FaWindows size={21} /></StartButton>
        <TaskSearch>
          <TaskSearchGlass />
          <TaskSearchText>Type here to search</TaskSearchText>
          <SearchArt />
        </TaskSearch>
        <TaskViewSlot>
          <TrayStroke w={20} h={24}>
            <path d="M1 2h11M1 22h11M3 8h9v8H3zM17 3v3M17 10v4M17 18v3" />
          </TrayStroke>
        </TaskViewSlot>
        {apps.map((app, i) => (
          <TaskApp key={i} $open={app.open} $focus={app.focus}>
            {app.icon}
            {app.badge && <AppBadge>{app.badge}</AppBadge>}
          </TaskApp>
        ))}
        <Tray>
          <TraySlot $w={34}><WeatherIcon /></TraySlot>
          <TraySlot $w={54}><TrayTemp>28°C</TrayTemp></TraySlot>
          <TraySlot $w={31} $ml={16}><TrayStroke w={18} h={12}><path d="M1 11l8-9 8 9" /></TrayStroke></TraySlot>
          <TraySlot $w={30}><TrayStroke w={16} h={20}><rect x="2" y="4" width="9" height="12" rx="1" /><path d="M11 8l4-2v8l-4-2M4 1h5M4 19h5" /></TrayStroke></TraySlot>
          <TraySlot $w={29}><TrayStroke w={20} h={16}><rect x="1" y="2" width="18" height="12" /><rect x="3" y="4" width="14" height="8" fill="#fff" /></TrayStroke></TraySlot>
          <TraySlot $w={29}><TrayStroke w={20} h={20}><circle cx="9" cy="9" r="6" fill="#bbb" stroke="none" /><circle cx="14" cy="11" r="5" fill="#777" stroke="none" /><path d="M14 9v7M16 9v7" /></TrayStroke></TraySlot>
          <TraySlot $w={33}><TrayStroke w={20} h={20}><path d="M3 19a15 15 0 0115-15M7 19a11 11 0 0111-11M11 19a7 7 0 017-7" /></TrayStroke></TraySlot>
          <TraySlot $w={36}><TrayStroke w={30} h={20}><rect x="1" y="1" width="28" height="18" /><path d="M5 6h20M5 10h20M8 14h14" strokeDasharray="2 1" /></TrayStroke></TraySlot>
          <Clock>2:45 PM<br />12/1/2023</Clock>
          <TraySlot $w={48}>
            <svg width="20" height="30" viewBox="0 0 20 30"><rect width="20" height="22" fill="#fff" /><path d="M3 6h14M3 10h14M3 14h9" stroke="#333" strokeWidth="1.500" /></svg>
            <NoteBadge>14</NoteBadge>
          </TraySlot>
        </Tray>
      </Taskbar>
    </Page>
  )
}
